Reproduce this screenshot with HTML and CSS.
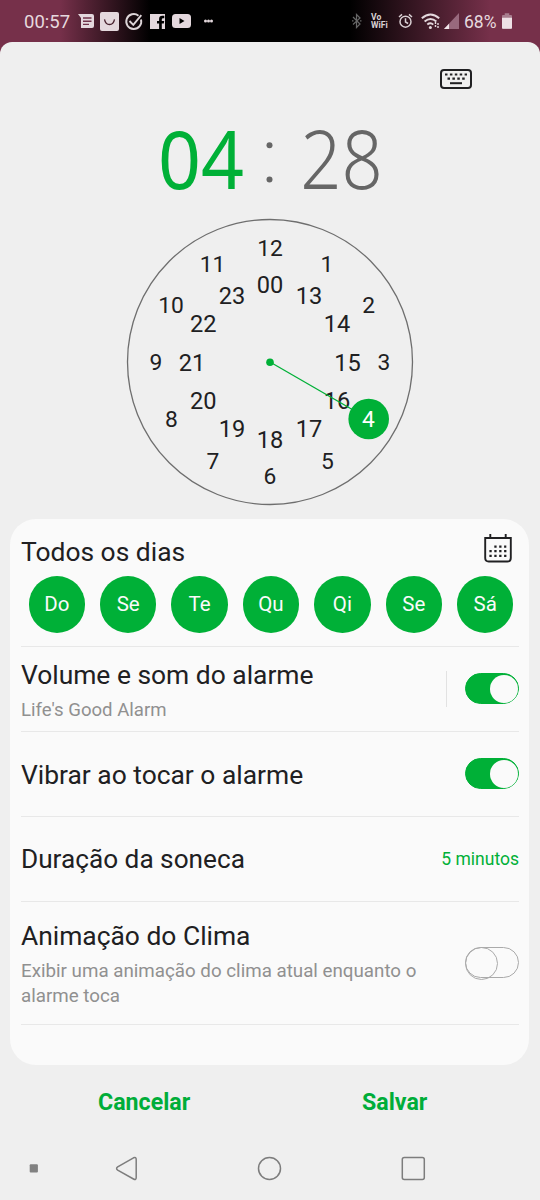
FILE: index.html
```html
<!DOCTYPE html>
<html lang="pt-BR">
<head>
<meta charset="utf-8">
<title>Alarme</title>
<link rel="stylesheet" href="styles.css">
</head>
<body>
<div class="phone">
  <header class="status">
    <div class="status-left">
      <span class="clock">00:57</span>
      <svg class="glyphs" width="140" height="24" viewBox="0 0 140 24" fill="#e4d8dd">
        <path d="M0 4h14q2 0 2 2v10q0 2-2 2H3V8z"/>
        <path d="M5 8h8.500M5 11.200h8.500M5 14.400h6" stroke="#70324a" stroke-width="1.400"/>
        <rect x="22" y="2" width="19" height="19" rx="2"/>
        <path d="M26.500 9.300q1 5.200 5 5.200t5-5.200" fill="none" stroke="#48212e" stroke-width="1.300"/>
        <path d="M60.500 5.700A7.500 7.500 0 1 0 63 9.500M51.500 11l3.800 3.800 8-9.600" fill="none" stroke="#ddd5d8" stroke-width="1.900"/>
        <path d="M72 4h15v15h-3.200v-5.500h2l.4-2.600h-2.400V9.500q0-1.300 1.300-1.300h1.200V5.700h-2q-3.200 0-3.200 3.300v1.900h-2.100v2.600h2.100V19H72z"/>
        <rect x="94" y="4" width="19" height="14" rx="3.500"/>
        <path d="M101.500 8v6l5-3z" fill="#000"/>
        <circle cx="127.500" cy="11" r="1.500"/><circle cx="130.500" cy="11" r="1.500"/><circle cx="133.500" cy="11" r="1.500"/>
      </svg>
    </div>
    <div class="status-right">
      <svg width="10" height="16" viewBox="0 0 10 16"><path d="M1 4l7 7-3.500 3.500v-13L8 5 1 11.500M0 7.800h1.500M8 7.800h1.500" fill="none" stroke="#676767" stroke-width="1.200"/></svg>
      <span class="vowifi"><span>Vo</span><span>WiFi</span></span>
      <svg class="alarm" width="15" height="16" viewBox="0 0 15 16"><g fill="none" stroke="#d8ced2" stroke-width="1.500"><circle cx="7.500" cy="8.700" r="5.500"/><path d="M7.500 5.300V9l2.600 1.500M1 4l3-2.600M14 4l-3-2.600"/></g></svg>
      <svg class="wifi" width="20" height="18" viewBox="0 0 20 18"><g fill="none" stroke="#e4d8dd" stroke-width="1.900"><path d="M.8 6.200q8.700-7.600 17.400 0M3.600 9.500q5.900-5 11.800 0M6.300 12.600q3.200-2.500 6 0"/></g><circle cx="9.400" cy="15.500" r="1.500" fill="#e4d8dd"/><path d="M14.500 10v6M17 11v5" stroke="#e4d8dd" stroke-width="1.400" stroke-dasharray="2 1"/></svg>
      <svg class="signal" width="15" height="16" viewBox="0 0 15 16"><path d="M15 0v16H0z" fill="#98697d"/><path d="M5 10.700V16H0z" fill="#f0e5e9"/></svg>
      <span class="pct">68%</span>
      <svg class="battery" width="10" height="16" viewBox="0 0 11 17"><path d="M3 0h5v2h2q1 0 1 1v13q0 1-1 1H1q-1 0-1-1V3q0-1 1-1h2z" fill="#a87d8e"/><path d="M0 5h11v11q0 1-1 1H1q-1 0-1-1z" fill="#eee1e6"/></svg>
    </div>
  </header>

  <main class="sheet">
    <div class="toolbar">
      <svg width="32" height="20" viewBox="0 0 32 20"><rect x="1" y="1" width="30" height="18" rx="3" fill="none" stroke="#202022" stroke-width="2"/><path d="M5 5.500h22" stroke="#202022" stroke-width="2.200" stroke-dasharray="2.500 2.400"/><path d="M7.500 9.600h18" stroke="#202022" stroke-width="2.200" stroke-dasharray="2.500 2.400"/><path d="M10 14.200h12" stroke="#202022" stroke-width="2"/></svg>
    </div>

    <svg class="time" width="240" height="80" viewBox="150 120 240 80">
      <text class="hour" x="158" y="189.300" textLength="86" lengthAdjust="spacingAndGlyphs">04</text>
      <circle cx="269.500" cy="145.300" r="3" fill="#666"/><circle cx="269.500" cy="179.500" r="3" fill="#666"/>
      <text class="minute" x="300.300" y="189.300" textLength="82.500" lengthAdjust="spacingAndGlyphs">28</text>
    </svg>

    <svg class="dial" width="290" height="290" viewBox="125 217 290 290">
      <circle cx="270" cy="362" r="142.500" fill="none" stroke="#6e6e6e" stroke-width="1.300"/>
      <g class="outer">
        <text x="270" y="256">12</text><text x="327" y="271.700">1</text><text x="368.700" y="313">2</text><text x="384" y="370">3</text>
        <text x="327.500" y="468.700">5</text><text x="270" y="484">6</text><text x="213" y="468.700">7</text><text x="171.300" y="427">8</text><text x="156" y="370">9</text><text x="171" y="313">10</text><text x="212.500" y="271.700">11</text>
      </g>
      <g class="inner">
        <text x="270" y="293.300">00</text><text x="309" y="303.700">13</text><text x="337" y="331.500">14</text><text x="347.500" y="370.500">15</text><text x="337" y="408.700">16</text><text x="309" y="437">17</text><text x="270" y="447.700">18</text><text x="232" y="437">19</text><text x="203.300" y="408.700">20</text><text x="192" y="370.500">21</text><text x="203.300" y="331.500">22</text><text x="232" y="303.700">23</text>
      </g>
      <path d="M270 362l98.700 57" stroke="#00b037" stroke-width="1.300"/>
      <circle cx="270" cy="362.300" r="3.800" fill="#00b037"/>
      <circle cx="368.700" cy="419" r="20.300" fill="#00b037"/>
      <g class="outer selected"><text x="368.500" y="427">4</text></g>
    </svg>

    <section class="card">
      <div class="repeat">
        <div class="repeat-head">
          <h2 class="title t-days">Todos os dias</h2>
          <svg class="calendar" width="28" height="29" viewBox="0 0 28 29"><path d="M1.200 4h25.600v20q0 3.500-3.500 3.500H4.700q-3.500 0-3.500-3.500zM6.300 4V0M21.700 4V0" fill="none" stroke="#202022" stroke-width="1.900"/><g stroke="#202022" stroke-width="2.300" stroke-dasharray="2.300 2.600"><path d="M10.300 12.600h12M5.400 17.200h17M5.400 21.900h17"/></g></svg>
        </div>
        <div class="days"><span>Do</span><span>Se</span><span>Te</span><span>Qu</span><span>Qi</span><span>Se</span><span>Sá</span></div>
      </div>
      <div class="row">
        <div class="copy"><h2 class="title">Volume e som do alarme</h2><p class="sub s-sound">Life's Good Alarm</p></div>
        <i class="divider"></i><span class="switch on"></span>
      </div>
      <div class="row"><h2 class="title t-vibrate">Vibrar ao tocar o alarme</h2><span class="switch on"></span></div>
      <div class="row"><h2 class="title t-snooze">Duração da soneca</h2><span class="value">5 minutos</span></div>
      <div class="row weather">
        <div class="copy"><h2 class="title">Animação do Clima</h2><p class="sub s-weather">Exibir uma animação do clima atual enquanto o<br>alarme toca</p></div>
        <span class="switch"></span>
      </div>
    </section>

    <div class="actions"><span class="cancel">Cancelar</span><span class="save">Salvar</span></div>

    <nav class="nav">
      <svg width="540" height="30" viewBox="0 1153 540 30"><rect x="29.700" y="1164.300" width="8.200" height="8.200" rx="1" fill="#818181"/><g fill="none" stroke="#7d7d7d" stroke-width="1.500"><path d="M133.500 1157.800Q136.200 1156.500 136.200 1159.500V1177.500Q136.200 1180.500 133.500 1179L117.700 1170.200Q115.500 1168.500 117.700 1166.800Z"/><circle cx="269.500" cy="1168.500" r="11"/><rect x="402.300" y="1157.600" width="22" height="22" rx="2"/></g></svg>
    </nav>
  </main>
</div>
</body>
</html>
```
FILE: styles.css
```css
* { box-sizing: border-box; }
body { margin: 0; font-family: Roboto, "Liberation Sans", sans-serif; color: #202022; }
h2, p { margin: 0; font-weight: 400; }
svg { display: block; flex: none; }
.phone { width: 540px; height: 1200px; overflow: hidden; background: linear-gradient(90deg, #76304a 0, #76304a 60px, #000 150px, #000 350px, #76304a 490px, #76304a 100%); }
.status { height: 42px; display: flex; justify-content: space-between; padding: 0 28px 0 24px; }
.status-left, .status-right { display: flex; align-items: center; color: #e6d9de; }
.clock { width: 54px; padding-top: 2px; font-size: 18.500px; white-space: nowrap; }
.glyphs { margin-top: 1px; }
.vowifi { display: flex; flex-direction: column; width: 20px; margin-left: 9px; font-size: 8.600px; line-height: 8px; font-weight: 700; color: #d8d0d3; }
.alarm { margin-left: 7px; }
.wifi { margin-left: 8px; }
.signal { margin-left: 3px; }
.pct { width: 32px; padding-top: 2px; margin-left: 5px; font-size: 17.500px; white-space: nowrap; }
.battery { margin-left: 6px; }

.sheet { height: 1158px; background: #efefef; border-radius: 12px 12px 0 0; display: flex; flex-direction: column; }
.toolbar { display: flex; justify-content: flex-end; padding: 27px 68px 31px 0; }
.time { align-self: center; overflow: visible; }
.hour, .minute { font-family: "Noto Sans", "Open Sans", sans-serif; font-size: 81px; }
.hour { fill: #00b037; }
.minute { fill: #666; font-weight: 300; }
.dial { align-self: center; margin-top: 17px; }
.dial text { text-anchor: middle; fill: #202022; }
.outer { font-size: 22.800px; }
.inner { font-size: 23.600px; }
.dial .selected text { fill: #fff; }

.card { height: 546px; margin: 12px 11px 0 10px; padding: 0 10px 0 11px; background: #fafafa; border-radius: 26px; }
.repeat { height: 128px; border-bottom: 1px solid #e8e8e8; }
.repeat-head { height: 57px; display: flex; justify-content: space-between; padding: 15px 7px 0 0; }
.title { font-size: 26.400px; line-height: 34px; white-space: nowrap; }
.t-days, .t-vibrate { padding-top: 1px; }
.t-snooze { font-size: 26.200px; }
.days { display: flex; justify-content: space-between; padding: 0 5.500px 0 7.500px; }
.days span { width: 56.500px; height: 56.500px; border-radius: 50%; display: grid; place-items: center; background: #00b037; color: #fafafa; font-size: 20.500px; }
.row { height: 85px; display: flex; align-items: center; border-bottom: 1px solid #e8e8e8; }
.sub { font-size: 18.750px; line-height: 25px; color: #909090; white-space: nowrap; }
.copy { padding-top: 2px; }
.s-sound { margin-top: 6px; font-size: 18.600px; }
.s-weather { margin-top: 6px; }
.divider { width: 1px; height: 36px; margin-left: auto; background: #e2e2e2; }
.switch { position: relative; width: 54px; height: 31px; flex: none; margin: 0 0 1px auto; border: 1px solid #aaa; border-radius: 16px; }
.divider + .switch { margin-left: 18px; }
.switch::after { content: ""; position: absolute; width: 31px; height: 31px; left: -1px; top: -1px; border: 1px solid #aaa; border-radius: 50%; }
.switch.on { background: #00b037; border-color: #00b037; }
.switch.on::after { width: 28px; height: 28px; left: auto; right: 0; top: .5px; background: #fafafa; border: 0; }
.value { margin-left: auto; color: #00b037; font-size: 17.500px; }
.weather { height: 123px; }
.actions { display: flex; height: 74px; padding-top: 22px; font-size: 23.200px; line-height: 30px; font-weight: 700; color: #00ad39; }
.cancel { width: 264px; padding-left: 98px; }
.save { padding-left: 98px; }
.nav { margin-top: 14px; }
```
